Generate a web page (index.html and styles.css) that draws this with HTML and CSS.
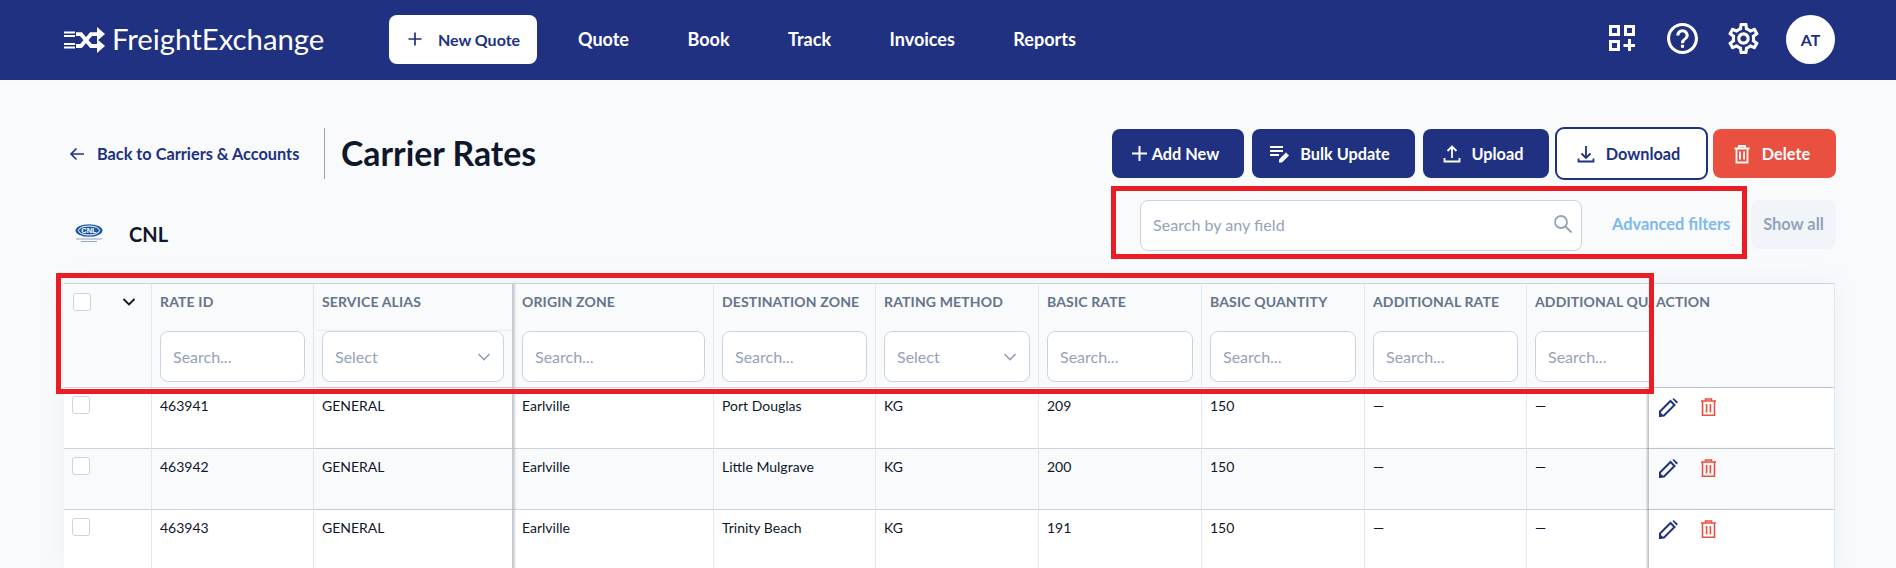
FILE: index.html
```html
<!DOCTYPE html>
<html lang="en">
<head>
<meta charset="utf-8">
<title>Carrier Rates</title>
<link rel="stylesheet" href="styles.css">
</head>
<body>
<header class="nav">
  <a class="logo">
    <svg class="logo-mark" viewBox="0 0 41 26">
      <g fill="#fff">
        <path d="M0 4.500h11v2H0zM0 8h11v2H0zM0 16h11v2H0zM0 19.500h11v2H0z"/>
        <path d="M33 0l8 7-8 7zM33 12l8 7-8 7z"/>
      </g>
      <path d="M12 7.200h5l10 11.800h7M12 19h5l10-11.800h7" fill="none" stroke="#fff" stroke-width="3.800"/>
    </svg>
    <span class="logo-text">FreightExchange</span>
  </a>
  <a class="new-quote">
    <svg class="ico18" viewBox="0 0 18 18"><path d="M9 2.500v13M2.500 9h13" stroke="#203182" stroke-width="1.700" fill="none"/></svg>
    <span>New Quote</span>
  </a>
  <nav class="menu">
    <a>Quote</a><a>Book</a><a>Track</a><a>Invoices</a><a>Reports</a>
  </nav>
  <div class="nav-right">
    <svg class="i-grid" viewBox="0 0 26 26"><g fill="none" stroke="#fff" stroke-width="3"><rect x="1.500" y="1.500" width="8" height="8"/><rect x="16.500" y="1.500" width="8" height="8"/><rect x="1.500" y="16.500" width="8" height="8"/><path d="M20.500 14v12M14.500 20.500h11.500"/></g></svg>
    <svg class="i-help" viewBox="2 2 20 20"><path fill="#fff" d="M11 18h2v-2h-2v2zm1-16C6.480 2 2 6.480 2 12s4.480 10 10 10 10-4.480 10-10S17.520 2 12 2zm0 18c-4.410 0-8-3.590-8-8s3.590-8 8-8 8 3.590 8 8-3.590 8-8 8zm0-14c-2.210 0-4 1.790-4 4h2c0-1.100.9-2 2-2s2 .9 2 2c0 2-3 1.750-3 5h2c0-2.250 3-2.500 3-5 0-2.210-1.790-4-4-4z"/></svg>
    <svg class="i-gear" viewBox="2 2 20 20"><path fill="#fff" d="M19.430 12.980c.04-.32.07-.64.07-.98 0-.34-.03-.66-.07-.98l2.110-1.650c.19-.15.24-.42.12-.64l-2-3.460c-.09-.16-.26-.25-.44-.25-.06 0-.12.01-.17.03l-2.490 1c-.52-.4-1.080-.73-1.690-.98l-.38-2.650C14.460 2.180 14.250 2 14 2h-4c-.25 0-.46.18-.49.42l-.38 2.650c-.61.25-1.170.59-1.690.98l-2.490-1c-.06-.02-.12-.03-.18-.03-.17 0-.34.09-.43.25l-2 3.460c-.13.22-.07.49.12.64l2.110 1.650c-.04.32-.07.65-.07.98 0 .33.03.66.07.98l-2.110 1.650c-.19.15-.24.42-.12.64l2 3.460c.09.16.26.25.44.25.06 0 .12-.01.17-.03l2.490-1c.52.4 1.080.73 1.690.98l.38 2.650c.03.24.24.42.49.42h4c.25 0 .46-.18.49-.42l.38-2.650c.61-.25 1.170-.59 1.690-.98l2.490 1c.06.02.12.03.18.03.17 0 .34-.09.43-.25l2-3.460c.12-.22.07-.49-.12-.64l-2.110-1.650zm-1.980-1.710c.04.31.05.52.05.73 0 .21-.02.43-.05.73l-.14 1.130.89.7 1.080.84-.7 1.210-1.270-.51-1.040-.42-.9.68c-.43.32-.84.56-1.250.73l-1.060.43-.16 1.130-.2 1.350h-1.400l-.19-1.350-.16-1.130-1.060-.43c-.43-.18-.83-.41-1.230-.71l-.91-.7-1.060.43-1.270.51-.7-1.210 1.080-.84.89-.7-.14-1.130c-.03-.31-.05-.54-.05-.74s.02-.43.05-.73l.14-1.130-.89-.7-1.080-.84.7-1.210 1.270.51 1.040.42.9-.68c.43-.32.84-.56 1.250-.73l1.060-.43.16-1.130.2-1.350h1.390l.19 1.350.16 1.130 1.060.43c.43.18.83.41 1.230.71l.91.7 1.060-.43 1.270-.51.7 1.210-1.070.85-.89.7.14 1.130zM12 8c-2.210 0-4 1.790-4 4s1.790 4 4 4 4-1.790 4-4-1.790-4-4-4zm0 6c-1.100 0-2-.9-2-2s.9-2 2-2 2 .9 2 2-.9 2-2 2z"/></svg>
    <span class="avatar">AT</span>
  </div>
</header>

<main class="page">
  <section class="top-row">
    <div class="crumbs">
      <a class="back">
        <svg class="ico16" viewBox="0 0 16 16"><path d="M15 8H2M7.500 2.500L2 8l5.500 5.500" fill="none" stroke="#203182" stroke-width="1.600"/></svg>
        <span>Back to Carriers &amp; Accounts</span>
      </a>
      <h1 class="title">Carrier Rates</h1>
    </div>
    <div class="actions">
      <a class="btn btn-primary btn-add"><svg class="ico15" viewBox="0 0 15 15"><path d="M7.500 0v15M0 7.500h15" stroke="#fff" stroke-width="2" fill="none"/></svg>Add New</a>
      <a class="btn btn-primary btn-bulk"><svg class="ico20" viewBox="0 0 20 20"><path d="M0 3h13M0 7h13M0 11h9" stroke="#fff" stroke-width="1.800" fill="none"/><path d="M9 18.500v-3l7-7 3 3-7 7z" fill="#fff"/></svg>Bulk Update</a>
      <a class="btn btn-primary btn-upload"><svg class="ico20" viewBox="0 0 20 20"><path d="M10 14V3M5.500 7L10 2.500 14.500 7M2.500 14v3.500h15V14" fill="none" stroke="#fff" stroke-width="1.800"/></svg>Upload</a>
      <a class="btn btn-outline"><svg class="ico20" viewBox="0 0 20 20"><path d="M10 2v11.500M5.500 9.500L10 14l4.500-4.500M2.500 14.500v3h15v-3" fill="none" stroke="#203182" stroke-width="1.800"/></svg>Download</a>
      <a class="btn btn-danger"><svg class="ico20" viewBox="0 0 20 20"><path d="M2.500 4.500h15M7 4.500V2h6v2.500M4.500 4.500v14h11v-14M8 7.500v8M12 7.500v8" fill="none" stroke="#fff" stroke-width="1.800"/></svg>Delete</a>
    </div>
  </section>

  <section class="second-row">
    <div class="carrier">
      <svg class="carrier-logo" viewBox="0 0 28 20">
        <ellipse cx="14" cy="6.500" rx="13.500" ry="6.300" fill="#1d5aa5"/>
        <ellipse cx="14" cy="6.500" rx="10.500" ry="4.500" fill="#1d5aa5" stroke="#fff" stroke-width="1"/>
        <text x="14" y="9.200" class="carrier-logo-text">CNL</text>
        <path d="M1 15h26M6 17.500h16" stroke="#8fa3c4" stroke-width="1"/>
      </svg>
      <span class="carrier-name">CNL</span>
    </div>
    <div class="filters">
      <label class="search">
        <input type="text" placeholder="Search by any field">
        <svg class="ico20" viewBox="0 0 20 20"><circle cx="8" cy="8" r="6" fill="none" stroke="#94a3b8" stroke-width="1.800"/><path d="M12.500 12.500L18.500 18.500" stroke="#94a3b8" stroke-width="2"/></svg>
      </label>
      <a class="adv">Advanced filters</a>
      <a class="show-all">Show all</a>
    </div>
  </section>

  <section class="table-wrap">
    <table class="rates">
      <colgroup>
        <col class="c88"><col class="c162"><col class="c200"><col class="c200"><col class="c162"><col class="c163"><col class="c163"><col class="c163"><col class="c162"><col class="c160"><col class="c186">
      </colgroup>
      <thead>
        <tr class="head-labels">
          <th class="chk-cell" rowspan="2">
            <div class="chk-head"><span class="checkbox"></span><svg class="chev" viewBox="0 0 14 10"><path d="M1.500 2l5.500 5.500L12.500 2" fill="none" stroke="#0f172a" stroke-width="1.800"/></svg></div>
          </th>
          <th>Rate ID</th><th class="sep">Service Alias</th><th>Origin Zone</th><th>Destination Zone</th><th>Rating Method</th><th>Basic Rate</th><th>Basic Quantity</th><th>Additional Rate</th><th>Additional Quantity</th><th class="action">Action</th>
        </tr>
        <tr class="head-filters">
          <th><input type="text" placeholder="Search..."></th>
          <th class="sep"><div class="select"><span>Select</span><svg viewBox="0 0 14 10"><path d="M1.500 2l5.500 5.500L12.500 2" fill="none" stroke="#94a3b8" stroke-width="1.600"/></svg></div></th>
          <th><input type="text" placeholder="Search..."></th>
          <th><input type="text" placeholder="Search..."></th>
          <th><div class="select"><span>Select</span><svg viewBox="0 0 14 10"><path d="M1.500 2l5.500 5.500L12.500 2" fill="none" stroke="#94a3b8" stroke-width="1.600"/></svg></div></th>
          <th><input type="text" placeholder="Search..."></th>
          <th><input type="text" placeholder="Search..."></th>
          <th><input type="text" placeholder="Search..."></th>
          <th><input type="text" placeholder="Search..."></th>
          <th class="action"></th>
        </tr>
      </thead>
      <tbody>
        <tr>
          <td class="chk-cell"><span class="checkbox"></span></td><td>463941</td><td class="sep">GENERAL</td><td>Earlville</td><td>Port Douglas</td><td>KG</td><td>209</td><td>150</td><td>—</td><td>—</td>
          <td class="action"><div class="row-actions"><svg class="i-edit" viewBox="0 0 19 19"><path d="M1 18v-4.500L11.500 3l4 4L5 17.500z" fill="none" stroke="#203182" stroke-width="2"/><path d="M1 18v-4l4 4zM13.500 1l1-1 4.500 4-1.500 1.500z" fill="#203182"/></svg><svg class="i-del" viewBox="0 0 15 18"><path d="M0 3h15M4.500 3V1h6v2M1.500 3v14.200h12V3M5.600 6v8.500M9.400 6v8.500" fill="none" stroke="#ea5040" stroke-width="1.600"/></svg></div></td>
        </tr>
        <tr>
          <td class="chk-cell"><span class="checkbox"></span></td><td>463942</td><td class="sep">GENERAL</td><td>Earlville</td><td>Little Mulgrave</td><td>KG</td><td>200</td><td>150</td><td>—</td><td>—</td>
          <td class="action"><div class="row-actions"><svg class="i-edit" viewBox="0 0 19 19"><path d="M1 18v-4.500L11.500 3l4 4L5 17.500z" fill="none" stroke="#203182" stroke-width="2"/><path d="M1 18v-4l4 4zM13.500 1l1-1 4.500 4-1.500 1.500z" fill="#203182"/></svg><svg class="i-del" viewBox="0 0 15 18"><path d="M0 3h15M4.500 3V1h6v2M1.500 3v14.200h12V3M5.600 6v8.500M9.400 6v8.500" fill="none" stroke="#ea5040" stroke-width="1.600"/></svg></div></td>
        </tr>
        <tr>
          <td class="chk-cell"><span class="checkbox"></span></td><td>463943</td><td class="sep">GENERAL</td><td>Earlville</td><td>Trinity Beach</td><td>KG</td><td>191</td><td>150</td><td>—</td><td>—</td>
          <td class="action"><div class="row-actions"><svg class="i-edit" viewBox="0 0 19 19"><path d="M1 18v-4.500L11.500 3l4 4L5 17.500z" fill="none" stroke="#203182" stroke-width="2"/><path d="M1 18v-4l4 4zM13.500 1l1-1 4.500 4-1.500 1.500z" fill="#203182"/></svg><svg class="i-del" viewBox="0 0 15 18"><path d="M0 3h15M4.500 3V1h6v2M1.500 3v14.200h12V3M5.600 6v8.500M9.400 6v8.500" fill="none" stroke="#ea5040" stroke-width="1.600"/></svg></div></td>
        </tr>
      </tbody>
    </table>
  </section>

  <div class="mark mark-search"></div>
  <div class="mark mark-head"></div>
</main>
</body>
</html>
```
FILE: styles.css
```css
* { box-sizing: border-box; }
html, body { margin: 0; height: 568px; overflow: hidden; }
body { background: #f8fafc; font-family: "Lato", "Liberation Sans", sans-serif; color: #0f172a; }
a { cursor: pointer; }
svg { display: block; flex: none; }

.nav { height: 80px; background: #203182; display: flex; align-items: center; padding: 0 61px 1px 64px; }
.logo { display: flex; align-items: center; gap: 7px; width: 325px; flex: none; }
.logo-mark { width: 41px; height: 26px; }
.logo-text { color: #fff; font-size: 29.3px; font-weight: 400; line-height: 36px; white-space: nowrap; margin-top: -1px; }
.new-quote { width: 148px; height: 49px; background: #fff; border-radius: 8px; display: flex; align-items: center; justify-content: center; gap: 14px; color: #203182; font-weight: 700; font-size: 16px; flex: none; padding-bottom: 1px; }
.ico18 { width: 18px; height: 18px; }
.menu { display: flex; align-items: center; gap: 58.5px; margin: -1px 0 0 41px; color: #fff; font-size: 18px; font-weight: 700; }
.nav-right { margin-left: auto; display: flex; align-items: center; }
.i-grid { width: 26px; height: 26px; margin-top: -3px; }
.i-help { width: 31px; height: 31px; margin-left: 32px; margin-top: -2px; }
.i-gear { width: 31px; height: 31px; margin-left: 30px; margin-top: -2px; }
.avatar { width: 49px; height: 49px; border-radius: 50%; background: #fff; margin-left: 27px; display: flex; align-items: center; justify-content: center; color: #203182; font-size: 16px; font-weight: 700; padding-bottom: 1px; }

.page { padding: 49px 60px 0 64px; position: relative; }
.top-row { display: flex; justify-content: space-between; height: 49px; }
.crumbs { display: flex; align-items: center; }
.back { display: flex; align-items: center; gap: 12px; padding-left: 5px; width: 261px; height: 51px; border-right: 1px solid #94a3b8; color: #203182; font-weight: 700; font-size: 16.3px; }
.ico16 { width: 16px; height: 16px; }
.title { margin: -2px 0 0 16px; font-size: 33.8px; font-weight: 700; line-height: 42px; color: #0f172a; }
.actions { display: flex; align-items: center; }
.btn { height: 49px; border-radius: 8px; display: flex; align-items: center; justify-content: center; font-weight: 700; font-size: 16.3px; gap: 10px; flex: none; padding-right: 7px; }
.btn-primary { background: #203182; color: #fff; }
.btn-add { width: 132px; gap: 5px; padding-right: 5px; }
.btn-bulk { width: 163px; margin-left: 8px; }
.btn-upload { width: 126px; margin-left: 8px; }
.btn-outline { width: 153px; height: 53px; margin-left: 6px; background: #fff; color: #203182; border: 2px solid #203182; border-radius: 9px; }
.btn-danger { width: 123px; margin-left: 5px; background: #ea5040; color: #fff; }
.ico15 { width: 15px; height: 15px; }
.ico20 { width: 20px; height: 20px; }

.second-row { display: flex; justify-content: space-between; align-items: flex-start; height: 105px; padding-top: 22px; }
.carrier { display: flex; align-items: center; gap: 26px; padding-left: 11px; height: 20px; margin-top: 24px; }
.carrier-logo { width: 28px; height: 20px; }
.carrier-logo-text { font-size: 7.5px; font-weight: 700; fill: #fff; text-anchor: middle; font-family: "Liberation Sans", sans-serif; }
.carrier-name { font-size: 20px; font-weight: 700; color: #0f172a; }
.filters { display: flex; align-items: flex-start; }
.search { width: 442px; height: 51px; background: #fff; border: 1px solid #cbd5e1; border-radius: 8px; display: flex; align-items: center; padding: 0 8px 0 12px; gap: 8px; }
.search input { flex: 1; min-width: 0; height: 26px; margin-top: -2px; border: 0; outline: 0; background: transparent; padding: 0; font: 400 16.1px "Lato", sans-serif; color: #0f172a; }
.search svg { margin-top: -3px; }
input::placeholder { color: #94a3b8; opacity: 1; }
.adv { margin-left: 30px; width: 139px; height: 49px; line-height: 47px; color: #7db9ee; font-weight: 700; font-size: 16.4px; white-space: nowrap; }
.show-all { width: 85px; height: 49px; line-height: 47px; text-align: center; background: #f1f4f9; border-radius: 8px; color: #94a3b8; font-weight: 700; font-size: 16.4px; }

.table-wrap { width: 1771px; height: 285px; overflow: hidden; box-shadow: 0 0 24px rgba(148,163,184,.1); }
.rates { border-collapse: separate; border-spacing: 0; table-layout: fixed; width: 1809px; font-size: 14px; }
.c88 { width: 88px; } .c160 { width: 160px; } .c162 { width: 162px; } .c163 { width: 163px; } .c186 { width: 186px; } .c200 { width: 200px; }
.rates th { background: #f8fafc; color: #64748b; font-weight: 700; font-size: 14px; letter-spacing: .15px; text-transform: uppercase; text-align: left; white-space: nowrap; overflow: hidden; border-right: 1px solid #e2e8f0; }
.head-labels th { height: 48px; padding: 0 0 0 8px; vertical-align: top; border-top: 1px solid #cbd5e1; line-height: 36px; }
.head-filters th { height: 56px; padding: 0 8px 5px 8px; vertical-align: top; border-bottom: 1px solid #cbd5e1; }
.rates th.chk-cell { vertical-align: top; padding: 9px 0 0 9px; border-bottom: 1px solid #cbd5e1; }
.chk-head { display: flex; align-items: center; gap: 31px; height: 18px; }
.chev { width: 14px; height: 10px; }
.checkbox { display: block; width: 18px; height: 18px; border: 1px solid #cbd5e1; border-radius: 3px; background: #fff; flex: none; }
.rates input, .select { display: flex; align-items: center; justify-content: space-between; width: 100%; height: 51px; background: #fff; border: 1px solid #cbd5e1; border-radius: 8px; padding: 0 12px; outline: 0; font: 400 16px "Lato", sans-serif; color: #94a3b8; text-transform: none; letter-spacing: 0; }
.select svg { width: 14px; height: 10px; }
.rates td { height: 61px; padding: 8px 0 0 8px; vertical-align: top; line-height: 20px; color: #0f172a; background: #fff; border-right: 1px solid #e2e8f0; border-bottom: 1px solid #cbd5e1; white-space: nowrap; }
.rates tbody tr:nth-child(2) td { background: #f8fafc; }
.rates .chk-cell { border-right: 1px solid #e2e8f0; }
.rates .sep { border-right: 2px solid #c8ccd2; box-shadow: 1px 0 2px rgba(0,0,0,.16); position: relative; }
.rates .action { position: sticky; right: 0; z-index: 2; border-right: 1px solid #e2e8f0; padding-left: 7px; }
.rates td.action { box-shadow: -2px 0 2px rgba(0,0,0,.24); padding-left: 8px; }
.row-actions { display: flex; align-items: flex-start; gap: 23px; padding: 2px 0 0 2px; }
.i-edit { width: 19px; height: 19px; }
.i-del { width: 15px; height: 18px; }

.mark { position: absolute; border: 5px solid #ea1c24; pointer-events: none; z-index: 5; }
.mark-search { left: 1111px; top: 106px; width: 636px; height: 73px; }
.mark-head { left: 56px; top: 193px; width: 1598px; height: 121px; }
```
